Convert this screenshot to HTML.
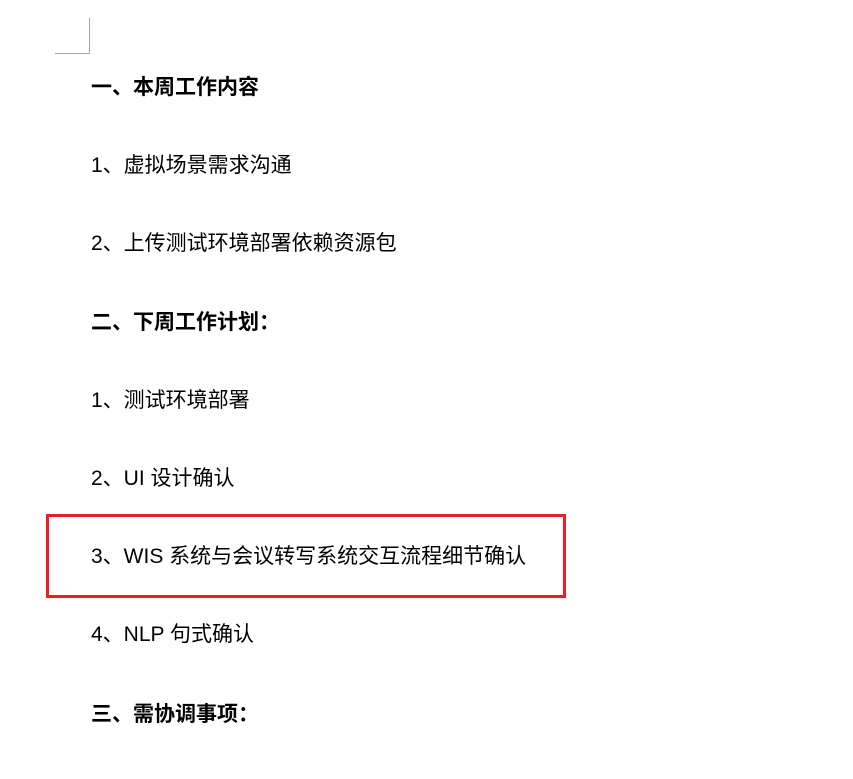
<!DOCTYPE html>
<html><head><meta charset="utf-8"><style>
html,body{margin:0;padding:0;background:#fff;width:853px;height:779px;overflow:hidden;position:relative;font-family:"Liberation Sans","Noto Sans CJK SC",sans-serif;color:#000}
.l{position:absolute;left:91px;font-size:21px;line-height:28px;white-space:nowrap}
.b{font-weight:bold}
.v{position:absolute;left:89px;top:18px;width:1px;height:36px;background:#a6a6a6}
.h{position:absolute;left:55px;top:53px;width:35px;height:1px;background:#a6a6a6}
.box{position:absolute;left:46px;top:514px;width:514px;height:78px;border:3px solid #ee1c25}
</style></head><body>
<div class="v"></div><div class="h"></div>
<div class="box"></div>
<div class="l b" style="top:74px">一、本周工作内容</div>
<div class="l" style="top:152px">1、虚拟场景需求沟通</div>
<div class="l" style="top:230px">2、上传测试环境部署依赖资源包</div>
<div class="l b" style="top:309px">二、下周工作计划：</div>
<div class="l" style="top:387px">1、测试环境部署</div>
<div class="l" style="top:465px">2、UI 设计确认</div>
<div class="l" style="top:543px">3、WIS 系统与会议转写系统交互流程细节确认</div>
<div class="l" style="top:621px">4、NLP 句式确认</div>
<div class="l b" style="top:701px">三、需协调事项：</div>
</body></html>
